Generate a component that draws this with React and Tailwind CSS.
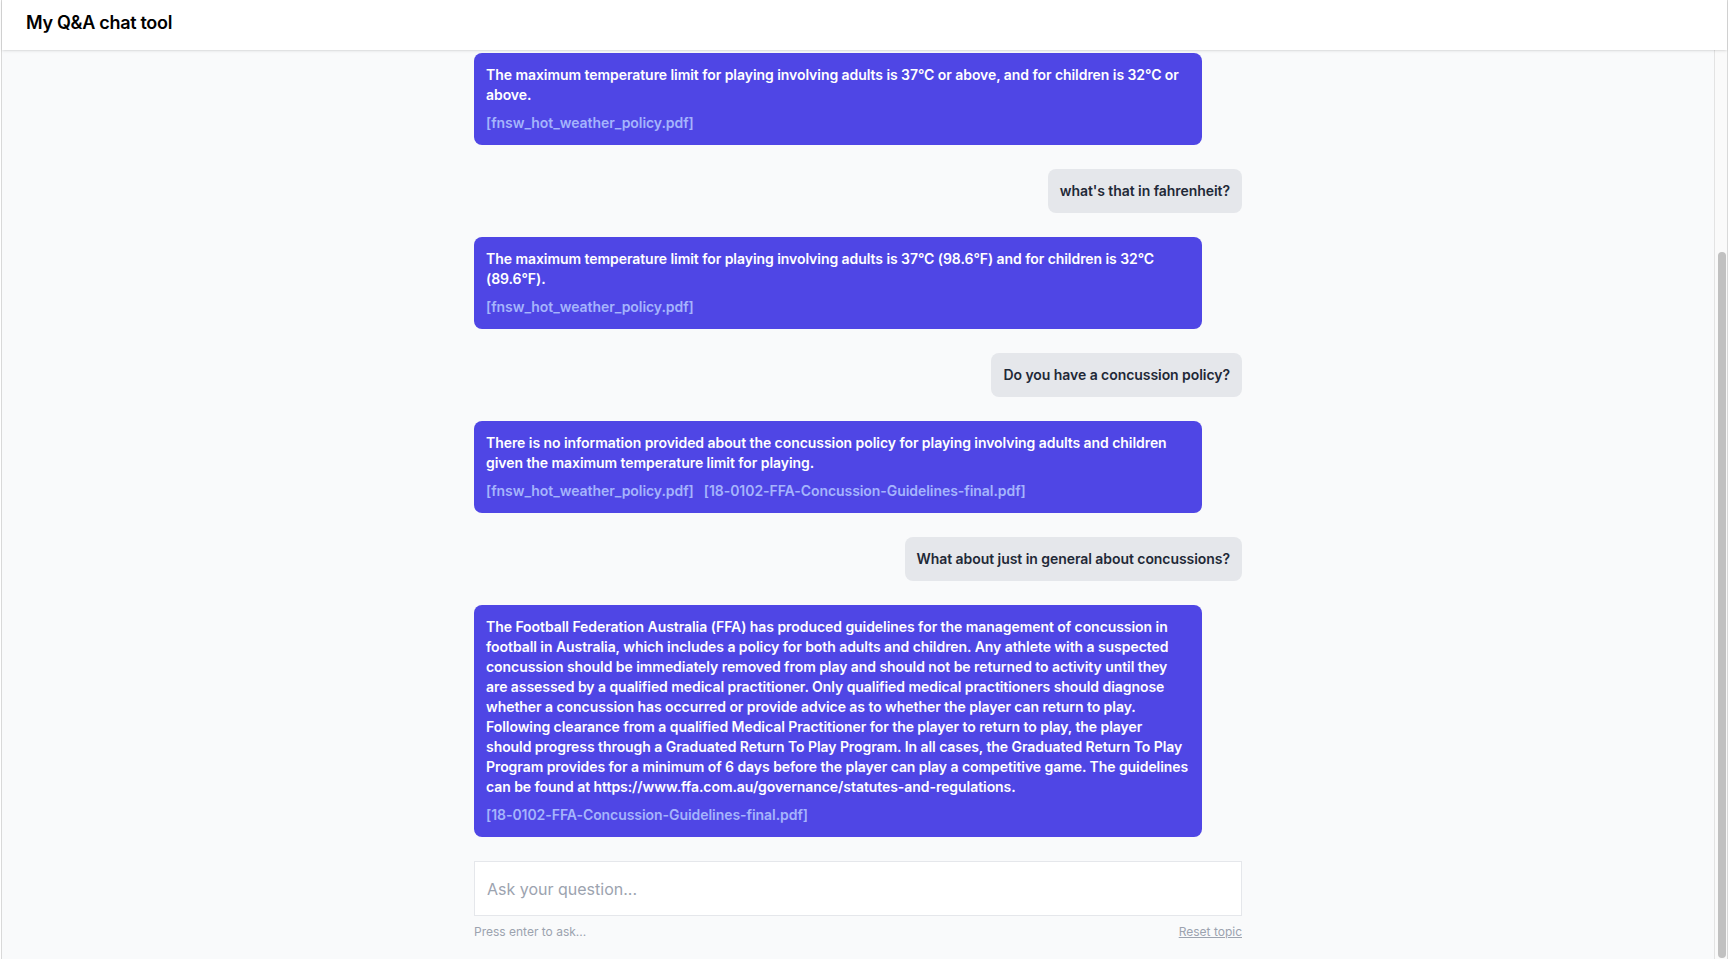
import { useState } from 'react'

const MESSAGES = [
  {
    role: 'assistant',
    text: 'The maximum temperature limit for playing involving adults is 37°C or above, and for children is 32°C or above.',
    sources: ['fnsw_hot_weather_policy.pdf'],
  },
  { role: 'user', text: "what's that in fahrenheit?" },
  {
    role: 'assistant',
    text: 'The maximum temperature limit for playing involving adults is 37°C (98.6°F) and for children is 32°C (89.6°F).',
    sources: ['fnsw_hot_weather_policy.pdf'],
  },
  { role: 'user', text: 'Do you have a concussion policy?' },
  {
    role: 'assistant',
    text: 'There is no information provided about the concussion policy for playing involving adults and children given the maximum temperature limit for playing.',
    sources: ['fnsw_hot_weather_policy.pdf', '18-0102-FFA-Concussion-Guidelines-final.pdf'],
  },
  { role: 'user', text: 'What about just in general about concussions?' },
  {
    role: 'assistant',
    text: 'The Football Federation Australia (FFA) has produced guidelines for the management of concussion in football in Australia, which includes a policy for both adults and children. Any athlete with a suspected concussion should be immediately removed from play and should not be returned to activity until they are assessed by a qualified medical practitioner. Only qualified medical practitioners should diagnose whether a concussion has occurred or provide advice as to whether the player can return to play. Following clearance from a qualified Medical Practitioner for the player to return to play, the player should progress through a Graduated Return To Play Program. In all cases, the Graduated Return To Play Program provides for a minimum of 6 days before the player can play a competitive game. The guidelines can be found at https://www.ffa.com.au/governance/statutes-and-regulations.',
    sources: ['18-0102-FFA-Concussion-Guidelines-final.pdf'],
  },
]

function Message({ msg }) {
  if (msg.role === 'user') {
    return (
      <div className="flex justify-end mb-6 ml-10">
        <div className="bg-[#e5e7eb] text-[#1f2937] rounded-lg px-3 py-3 text-sm font-semibold tracking-[-0.06px]">
          {msg.text}
        </div>
      </div>
    )
  }
  return (
    <div className="mb-6 mr-10 bg-[#4f46e5] text-white rounded-lg px-3 py-3 text-sm font-semibold tracking-[-0.06px]">
      <p>{msg.text}</p>
      <div className="flex flex-wrap gap-x-[10px] mt-2 text-[#a5b4fc]">
        {msg.sources.map((s) => (
          <span key={s}>[{s}]</span>
        ))}
      </div>
    </div>
  )
}

export default function App() {
  const [question, setQuestion] = useState('')

  return (
    <div
      className="h-screen bg-white pl-px overflow-hidden"
      style={{ fontFamily: 'Inter, "Noto Sans", sans-serif' }}
    >
      <div className="h-full flex flex-col border-x border-[#d9d9d9]">
        <header className="relative z-10 h-[50px] shrink-0 bg-white shadow-sm px-6 pt-[9px]">
          <h1 className="text-lg font-semibold text-black tracking-[-0.3px]">My Q&amp;A chat tool</h1>
        </header>

        <div className="flex-1 flex min-h-0">
          <main className="flex-1 min-w-0 bg-[#f9fafb] overflow-hidden flex flex-col justify-end pb-[19px]">
            <div className="w-full max-w-3xl mx-auto">
              {MESSAGES.map((m, i) => (
                <Message key={i} msg={m} />
              ))}

              <input
                value={question}
                onChange={(e) => setQuestion(e.target.value)}
                placeholder="Ask your question..."
                className="w-full h-[55px] bg-white border border-[#e5e7eb] px-3 text-base text-[#1f2937] placeholder:text-[#9ca3af] outline-none"
              />
              <div className="flex justify-between mt-2 text-xs text-[#9ca3af]">
                <span>Press enter to ask...</span>
                <button className="underline">Reset topic</button>
              </div>
            </div>
          </main>

          {/* scrollbar */}
          <div className="w-[13px] shrink-0 border-l border-[#e3e3e3] bg-[#fafafa] pl-[3px] pt-[202px] pb-px">
            <div className="w-[8px] h-full rounded-full bg-[#c1c1c1]" />
          </div>
        </div>
      </div>
    </div>
  )
}
